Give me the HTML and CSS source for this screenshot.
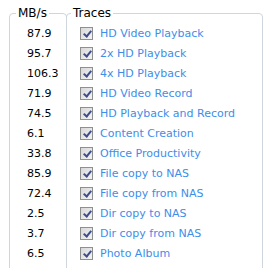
FILE: index.html
```html
<!DOCTYPE html>
<html>

<head>
    <meta name="viewport" content="width=device-width, initial-scale=1">
    <link rel="stylesheet" href="styles.css">
    <title>Traces</title>
</head>

<body>
    <div id="container">
        <fieldset class="box speeds">
            <legend>MB/s</legend>
            <div class="row num">87.9</div>
            <div class="row num">95.7</div>
            <div class="row num">106.3</div>
            <div class="row num">71.9</div>
            <div class="row num">74.5</div>
            <div class="row num">6.1</div>
            <div class="row num">33.8</div>
            <div class="row num">85.9</div>
            <div class="row num">72.4</div>
            <div class="row num">2.5</div>
            <div class="row num">3.7</div>
            <div class="row num">6.5</div>
        </fieldset>

        <fieldset class="box traces">
            <legend>Traces</legend>
            <div class="row trace"><span class="check"></span><span class="label">HD Video Playback</span></div>
            <div class="row trace"><span class="check"></span><span class="label">2x HD Playback</span></div>
            <div class="row trace"><span class="check"></span><span class="label">4x HD Playback</span></div>
            <div class="row trace"><span class="check"></span><span class="label">HD Video Record</span></div>
            <div class="row trace"><span class="check"></span><span class="label">HD Playback and Record</span></div>
            <div class="row trace"><span class="check"></span><span class="label">Content Creation</span></div>
            <div class="row trace"><span class="check"></span><span class="label">Office Productivity</span></div>
            <div class="row trace"><span class="check"></span><span class="label">File copy to NAS</span></div>
            <div class="row trace"><span class="check"></span><span class="label">File copy from NAS</span></div>
            <div class="row trace"><span class="check"></span><span class="label">Dir copy to NAS</span></div>
            <div class="row trace"><span class="check"></span><span class="label">Dir copy from NAS</span></div>
            <div class="row trace"><span class="check"></span><span class="label">Photo Album</span></div>
        </fieldset>
    </div>
</body>

</html>
```

FILE: styles.css
```css
body {
    margin: 0;
    background: #ffffff;
    font-family: "DejaVu Sans", Verdana, sans-serif;
    font-size: 11px;
}

#container {
    display: flex;
    align-items: flex-start;
    padding: 6px 0 0 9px;
}

.box {
    margin: 0;
    border: 1px solid #cfd6de;
    border-radius: 4px;
    padding: 3px 0 20px 6px;
}

.box legend {
    padding: 0 2px;
    font-size: 12px;
    line-height: 14px;
    color: #000000;
}

.speeds {
    width: 50px;
}

.traces {
    width: 191px;
    margin-left: -1px;
    padding-left: 4px;
}

.row {
    height: 20px;
    display: flex;
    align-items: center;
}

.num {
    padding-left: 11px;
    color: #000000;
}

.trace {
    padding-left: 9px;
}

.check {
    width: 11px;
    height: 11px;
    border: 1px solid #8e8f8f;
    background: linear-gradient(135deg, #d8d8d8, #f4f4f4);
    margin-right: 7px;
    position: relative;
}

.check::after {
    content: "";
    position: absolute;
    left: 4px;
    top: 1px;
    width: 3px;
    height: 6px;
    border: solid #3e4e8c;
    border-width: 0 2px 2px 0;
    transform: rotate(40deg);
}

.label {
    color: #3d8ee9;
}
```
